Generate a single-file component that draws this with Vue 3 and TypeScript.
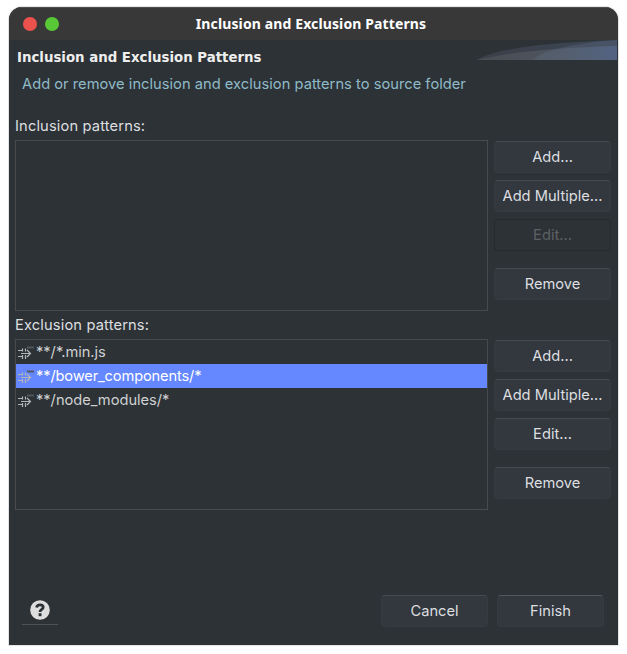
<script setup lang="ts">
interface PatternAction {
  label: string
  disabled?: boolean
  spaced?: boolean
}
interface PatternGroup {
  title: string
  patterns: string[]
  selected: number
  actions: PatternAction[]
}

const makeActions = (editDisabled: boolean): PatternAction[] => [
  { label: 'Add...' },
  { label: 'Add Multiple...' },
  { label: 'Edit...', disabled: editDisabled },
  { label: 'Remove', spaced: true },
]

const groups: PatternGroup[] = [
  { title: 'Inclusion patterns:', patterns: [], selected: -1, actions: makeActions(true) },
  {
    title: 'Exclusion patterns:',
    patterns: ['**/*.min.js', '**/bower_components/*', '**/node_modules/*'],
    selected: 1,
    actions: makeActions(false),
  },
]
</script>

<template>
  <div class="window">
    <header class="titlebar">
      <span class="dot red"></span>
      <span class="dot green"></span>
      <span class="caption">Inclusion and Exclusion Patterns</span>
    </header>

    <section class="banner">
      <div class="banner-text">
        <h1>Inclusion and Exclusion Patterns</h1>
        <p>Add or remove inclusion and exclusion patterns to source folder</p>
      </div>
      <svg class="swoosh" width="140" height="20" viewBox="0 0 140 20">
        <defs>
          <linearGradient id="fade" x1="0" x2="1" y1="0" y2="0">
            <stop offset="0" stop-color="#484c52" />
            <stop offset="0.6" stop-color="#4f555f" />
            <stop offset="1" stop-color="#4b5c80" />
          </linearGradient>
          <linearGradient id="shade" x1="0" x2="1" y1="0" y2="0">
            <stop offset="0" stop-color="#3b4048" />
            <stop offset="1" stop-color="#3b4555" />
          </linearGradient>
        </defs>
        <path d="M0 20C18 9 62 3 140 0V20Z" fill="url(#shade)" />
        <path d="M0 20C30 12 78 8 140 6V20Z" fill="url(#fade)" />
        <path d="M56 20C65 10 98 3 140 0V20Z" fill="#64738c" opacity=".3" />
      </svg>
    </section>

    <main>
      <section v-for="group in groups" :key="group.title" class="group">
        <h2>{{ group.title }}</h2>
        <div class="group-body">
          <ul class="list">
            <li
              v-for="(pattern, index) in group.patterns"
              :key="pattern"
              :class="{ selected: index === group.selected }"
            >
              <svg class="filter" width="18" height="16" viewBox="0 0 18 16">
                <path class="strokes" d="M1 6.5H5M1 12.5H5M5.5 4.5V7.5M5.5 11V15M8.5 4.5V7.5M8.5 11V15M4 9.5H13" />
                <path class="strokes" d="M10 6L13.5 9.5L10 13" />
                <path class="mark" d="M10 3.5H17" />
              </svg>
              <span>{{ pattern }}</span>
            </li>
          </ul>
          <div class="actions">
            <button
              v-for="action in group.actions"
              :key="action.label"
              type="button"
              :disabled="action.disabled"
              :class="{ spaced: action.spaced }"
            >{{ action.label }}</button>
          </div>
        </div>
      </section>
    </main>

    <footer>
      <div class="help">
        <svg width="20" height="20" viewBox="0 0 20 20">
          <circle cx="10" cy="10" r="9.8" fill="#dededf" />
          <path d="M6.6 7.4C7 5.4 8.4 4.8 10 4.8C12 4.8 13.2 5.8 13.2 7.2C13.2 9.4 10 9.2 10 12" fill="none" stroke="#2d3135" stroke-width="2.8" />
          <path d="M8.6 13.2H11.5V16.2H8.6Z" fill="#2d3135" />
        </svg>
      </div>
      <div class="decisions">
        <button type="button">Cancel</button>
        <button type="button" class="primary">Finish</button>
      </div>
    </footer>
  </div>
</template>

<style>
body {
  background: #fff;
}
#app {
  display: flow-root;
}
</style>

<style scoped>
.window {
  display: flex;
  flex-direction: column;
  box-sizing: border-box;
  width: 609px;
  height: 638px;
  margin: 7px 9px 9px;
  overflow: hidden;
  border-radius: 13px 13px 0 0;
  background: #2d3236;
  box-shadow: 0 0 0 1px #e4e4e4;
  color: #dddfe0;
  font: 14.67px/20px Inter, "Noto Sans", sans-serif;
}
.titlebar {
  display: grid;
  grid-template-columns: 14px 14px 1fr;
  gap: 8px;
  align-items: center;
  box-sizing: border-box;
  height: 33px;
  padding: 0 14px;
  border-top: 1px solid #505050;
  background: #383838;
}
.dot {
  width: 14px;
  height: 14px;
  border-radius: 50%;
}
.red { background: #ea524b; }
.green { background: #59c837; }
.caption {
  padding-right: 49px;
  color: #fff;
  font: bold 14px/20px "Noto Sans", sans-serif;
  letter-spacing: 0.12px;
  text-align: center;
  white-space: nowrap;
}
.banner {
  display: flex;
  justify-content: space-between;
  height: 70px;
  padding-right: 1px;
}
.banner-text {
  padding: 8px 0 0 8px;
  white-space: nowrap;
}
h1 {
  margin: 0;
  color: #eee;
  font: bold 13.33px/20px "DejaVu Sans", sans-serif;
}
.banner p {
  margin: 6px 0 0 5px;
  color: #8fbac8;
  letter-spacing: 0.03px;
}
.swoosh {
  flex: none;
  margin-left: -20px;
}
main {
  padding: 0 7px 0 6px;
}
.group {
  height: 199px;
}
h2 {
  margin: 0;
  padding-top: 6px;
  height: 24px;
  font: inherit;
  letter-spacing: 0.15px;
}
.group-body {
  display: flex;
  gap: 6px;
}
.list {
  box-sizing: border-box;
  width: 473px;
  height: 171px;
  margin: 0;
  padding: 0;
  border: 1px solid #484b4d;
  list-style: none;
}
.list li {
  display: flex;
  align-items: center;
  gap: 1px;
  height: 24px;
  padding-left: 1px;
  color: #cfd1d2;
  letter-spacing: -0.03px;
}
.list .selected {
  background: #6587ff;
  color: #fff;
  letter-spacing: -0.15px;
}
.filter { fill: none; }
.strokes { stroke: #b4b6b7; stroke-width: 1.2; }
.mark { stroke: #54585b; stroke-width: 1.8; }
.actions {
  display: flex;
  flex-direction: column;
  gap: 7px;
  padding-top: 1px;
}
button {
  box-sizing: border-box;
  width: 117px;
  height: 32px;
  margin: 0;
  padding: 0;
  border: 1px solid #363b3f;
  border-top-color: #474b4f;
  border-radius: 4px;
  background: #32383e;
  color: #dddfe0;
  font: inherit;
  white-space: nowrap;
}
button:disabled {
  border-color: #272b2e;
  background: #2d3236;
  color: #5d6164;
}
button.spaced { margin-top: 10px; }
footer {
  display: flex;
  justify-content: space-between;
  margin-top: auto;
  padding: 0 14px 18px 13px;
}
.help {
  display: flex;
  justify-content: center;
  box-sizing: border-box;
  width: 36px;
  height: 30px;
  padding-top: 5px;
  border-bottom: 1px solid #505356;
}
.decisions {
  display: flex;
  gap: 9px;
}
.decisions button { width: 107px; }
.decisions .primary { border-top-color: #54575a; }
</style>
